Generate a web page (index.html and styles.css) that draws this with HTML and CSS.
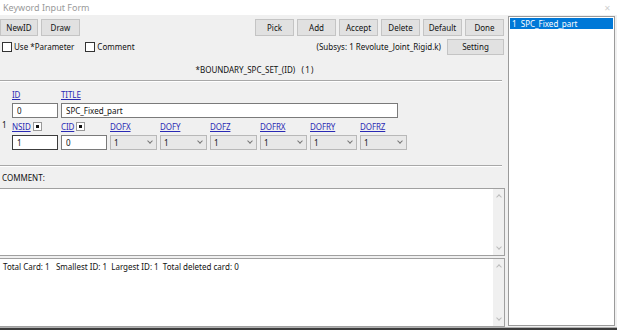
FILE: index.html
```html
<!DOCTYPE html>
<html lang="en">
<head>
    <meta charset="UTF-8">
    <title>Keyword Input Form</title>
    <link rel="stylesheet" href="styles.css">
</head>
<body>
<div class="window">
    <div class="titlebar">
        <span class="caption">Keyword Input Form</span>
        <span class="close">&#x2715;</span>
    </div>
    <div class="frame">
        <div class="main">
            <div class="toolbar">
                <div class="group">
                    <button class="btn btn-newid">NewID</button>
                    <button class="btn">Draw</button>
                </div>
                <div class="group">
                    <button class="btn">Pick</button>
                    <button class="btn">Add</button>
                    <button class="btn">Accept</button>
                    <button class="btn">Delete</button>
                    <button class="btn">Default</button>
                    <button class="btn">Done</button>
                </div>
            </div>
            <div class="options">
                <label class="check"><span class="box"></span>Use *Parameter</label>
                <label class="check"><span class="box"></span>Comment</label>
                <span class="subsys">(Subsys: 1 Revolute_Joint_Rigid.k)</span>
                <button class="btn btn-setting">Setting</button>
            </div>
            <div class="kwtitle">*BOUNDARY_SPC_SET_(ID)&nbsp;&nbsp;&nbsp;(&thinsp;1&thinsp;)</div>
            <div class="sep"></div>
            <div class="card">
                <div class="row labels">
                    <span class="rownum"></span>
                    <span class="cell"><a class="lbl">ID</a></span>
                    <span class="cell wide"><a class="lbl">TITLE</a></span>
                </div>
                <div class="row fields">
                    <span class="rownum"></span>
                    <span class="cell"><input class="field" value="0"></span>
                    <span class="cell wide"><input class="field title" value="SPC_Fixed_part"></span>
                </div>
                <div class="row labels">
                    <span class="rownum">1</span>
                    <span class="cell"><a class="lbl">NSID</a><span class="pick"></span></span>
                    <span class="cell"><a class="lbl">CID</a><span class="pick"></span></span>
                    <span class="cell sel"><a class="lbl">DOFX</a></span>
                    <span class="cell sel"><a class="lbl">DOFY</a></span>
                    <span class="cell sel"><a class="lbl">DOFZ</a></span>
                    <span class="cell sel"><a class="lbl">DOFRX</a></span>
                    <span class="cell sel"><a class="lbl">DOFRY</a></span>
                    <span class="cell sel"><a class="lbl">DOFRZ</a></span>
                </div>
                <div class="row fields">
                    <span class="rownum"></span>
                    <span class="cell"><input class="field focus" value="1"></span>
                    <span class="cell"><input class="field" value="0"></span>
                    <span class="cell sel"><span class="combo">1<i class="chev"></i></span></span>
                    <span class="cell sel"><span class="combo">1<i class="chev"></i></span></span>
                    <span class="cell sel"><span class="combo">1<i class="chev"></i></span></span>
                    <span class="cell sel"><span class="combo">1<i class="chev"></i></span></span>
                    <span class="cell sel"><span class="combo">1<i class="chev"></i></span></span>
                    <span class="cell sel"><span class="combo">1<i class="chev"></i></span></span>
                </div>
            </div>
            <div class="sep sep2"></div>
            <div class="comment-label">COMMENT:</div>
            <div class="textbox comment">
                <div class="text"></div>
                <div class="scroll"><i class="up"></i><i class="down"></i></div>
            </div>
            <div class="textbox status">
                <div class="text">Total Card: 1&nbsp;&nbsp;&nbsp;Smallest ID: 1&nbsp;&nbsp;Largest ID: 1&nbsp;&nbsp;Total deleted card:&nbsp;0</div>
                <div class="scroll"><i class="up"></i><i class="down"></i></div>
            </div>
        </div>
        <div class="list">
            <div class="item selected">1&nbsp;&nbsp;SPC_Fixed_part</div>
        </div>
    </div>
    <div class="bottom"></div>
</div>
</body>
</html>
```

FILE: styles.css
```css
body {
    margin: 0;
    padding: 0;
    font-family: "Noto Sans", "Open Sans", sans-serif;
    font-size: 8px;
    color: #111;
    background-color: #f0f0f0;
    overflow: hidden;
}
.window {
    width: 617px;
    height: 330px;
    display: flex;
    flex-direction: column;
    background: #f0f0f0;
}
.titlebar {
    height: 17px;
    background: #fff;
    display: flex;
    align-items: center;
    justify-content: space-between;
    padding: 0 6px 0 3px;
}
.caption {
    color: #9a9a9a;
    font-size: 9px;
}
.close {
    color: #d0d0d0;
    font-size: 8px;
}
.frame {
    flex: 1;
    display: flex;
    padding-top: 1px;
}
.main {
    width: 505px;
    display: flex;
    flex-direction: column;
}
.toolbar {
    display: flex;
    justify-content: space-between;
    padding: 3px 1px 0 0;
}
.group {
    display: flex;
    gap: 3px;
}
.btn {
    width: 39px;
    height: 17px;
    padding: 0;
    font-family: inherit;
    font-size: 8px;
    color: #111;
    background: #e1e1e1;
    border: 1px solid #c4c4c4;
}
.btn-newid {
    width: 38px;
}
.options {
    display: flex;
    align-items: center;
    height: 19px;
    padding: 1px 1px 0 2px;
}
.check {
    display: flex;
    align-items: center;
    gap: 2px;
    margin-right: 11px;
}
.box {
    width: 8px;
    height: 8px;
    border: 1px solid #333;
    background: #fff;
}
.subsys {
    margin-left: auto;
    margin-right: 6px;
}
.btn-setting {
    width: 57px;
    height: 16px;
}
.kwtitle {
    text-align: center;
    height: 16px;
    line-height: 16px;
    margin-top: 6px;
    padding-left: 4px;
}
.sep {
    height: 1px;
    margin: 2px 3px 0 0;
    background: #a8a8a8;
    border-bottom: 1px solid #fff;
}
.card {
    padding: 5px 0 0 0;
    display: flex;
    flex-direction: column;
}
.row {
    display: flex;
    gap: 3px;
}
.rownum {
    width: 9px;
    padding-left: 2px;
}
.row .rownum + .cell {
    margin-left: -2px;
}
.cell {
    width: 46px;
    display: flex;
    align-items: center;
    gap: 2px;
}
.cell.wide {
    width: 337px;
}
.cell.sel {
    width: 47px;
    gap: 0;
}
.labels {
    height: 15px;
}
.lbl {
    color: #2a2ab4;
    text-decoration: underline;
    font-size: 8px;
    letter-spacing: -0.1px;
}
.pick {
    width: 7px;
    height: 7px;
    background: #fff;
    border: 1px solid #999;
    position: relative;
}
.pick::after {
    content: "";
    position: absolute;
    left: 2px;
    top: 2px;
    width: 3px;
    height: 3px;
    background: #111;
}
.fields {
    height: 16px;
    margin-bottom: 1px;
}
.field {
    box-sizing: border-box;
    width: 46px;
    height: 15px;
    padding: 0 0 0 4px;
    font-family: inherit;
    font-size: 8px;
    color: #111;
    background: #fff;
    border: 1px solid #7a7a7a;
    outline: none;
}
.field.title {
    width: 337px;
}
.field.focus {
    border-color: #3c3c3c;
}
.combo {
    box-sizing: border-box;
    width: 47px;
    height: 15px;
    display: flex;
    align-items: center;
    justify-content: space-between;
    padding: 0 4px 0 3px;
    background: #e8e8e8;
    border: 1px solid #b8b8b8;
}
.chev {
    width: 3px;
    height: 3px;
    border-right: 1px solid #777;
    border-bottom: 1px solid #777;
    transform: rotate(45deg);
    margin-top: -2px;
}
.sep2 {
    margin-top: 14px;
}
.comment-label {
    height: 21px;
    line-height: 21px;
    padding-left: 2px;
}
.textbox {
    display: flex;
    background: #fff;
    border: 1px solid #a0a0a0;
    border-left: none;
}
.comment {
    height: 66px;
}
.status {
    height: 67px;
    margin-top: 2px;
}
.textbox .text {
    flex: 1;
    padding: 2px 3px;
}
.scroll {
    width: 11px;
    background: #f0f0f0;
    display: flex;
    flex-direction: column;
    justify-content: space-between;
    align-items: center;
    padding: 6px 0 6px;
}
.up, .down {
    width: 3px;
    height: 3px;
    border-left: 1px solid #bbb;
    border-top: 1px solid #bbb;
}
.up {
    transform: rotate(45deg);
}
.down {
    transform: rotate(225deg);
}
.list {
    width: 105px;
    margin-left: 3px;
    height: 307px;
    background: #fff;
    border: 1px solid #9a9a9a;
    padding-top: 1px;
}
.item {
    height: 11px;
    line-height: 11px;
    padding-left: 2px;
    margin: 0 1px;
}
.item.selected {
    background: #0078d7;
    color: #fff;
}
.bottom {
    height: 2px;
    background: #3c3c3c;
    border-top: 1px solid #b0b0b0;
}
```
